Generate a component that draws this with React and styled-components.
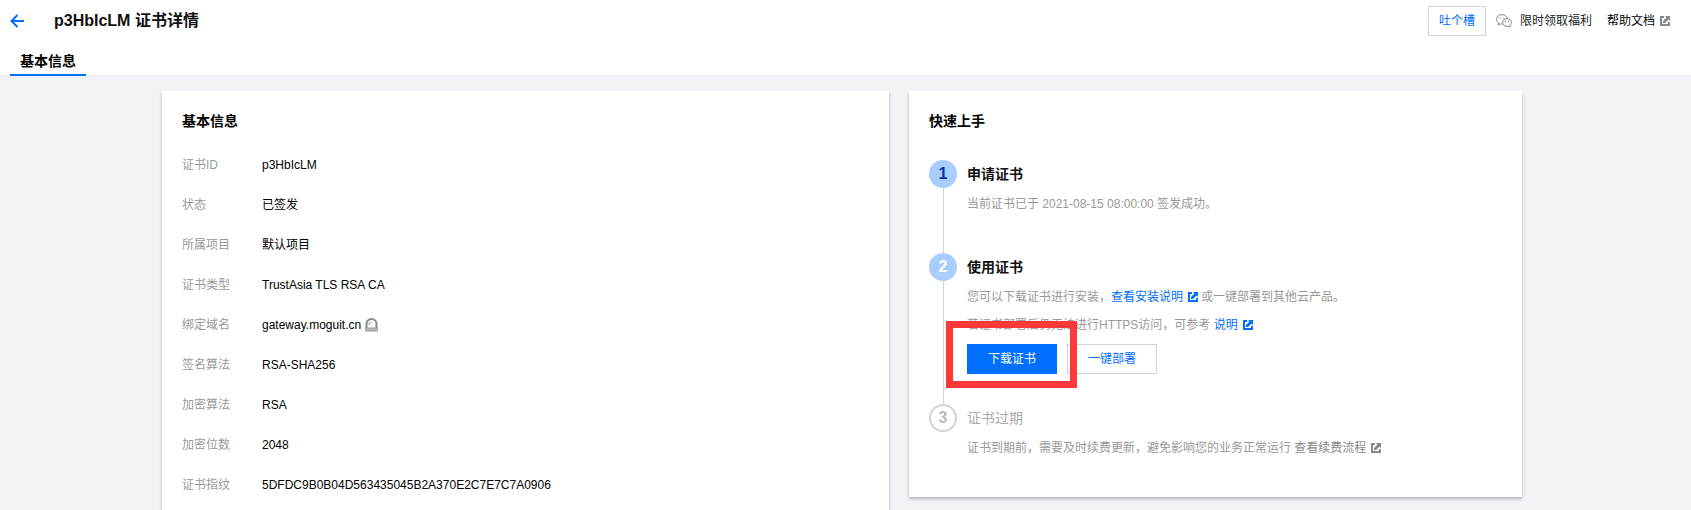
import React from "react";
import styled, { createGlobalStyle, css } from "styled-components";

const BLUE = "#006eff";
const GREY = "#999";
const LINE = "#cfd5de";

const GlobalStyle = createGlobalStyle`
  *, *::before, *::after { box-sizing: border-box; }
  body {
    margin: 0;
    color: #000;
    font: 12px/20px "Liberation Sans", "Noto Sans CJK SC", sans-serif;
  }
  h1, h2, h3, p, dl, dd, ol { margin: 0; padding: 0; }
  button { font: inherit; cursor: pointer; }
`;

const Page = styled.div`
  display: flex;
  flex-direction: column;
  height: 100vh;
  overflow: hidden;
  background: #f2f3f7;
`;

const Header = styled.header`
  flex: none;
  background: #fff;
  border-bottom: 1px solid #e5e8ed;
`;

const TitleBar = styled.div`
  display: flex;
  align-items: center;
  height: 42px;
  padding: 0 21px 0 10px;
`;

const BackButton = styled.button`
  display: flex;
  margin-right: 30px;
  padding: 0;
  border: 0;
  background: none;
  color: ${BLUE};
`;

const PageTitle = styled.h1`
  flex: 1;
  font-size: 16px;
  line-height: 24px;
  font-weight: 700;
  color: #111;
`;

const HeaderActions = styled.div`
  display: flex;
  align-items: center;
  gap: 15px;
`;

const Button = styled.button`
  height: 30px;
  padding: 0 ${(p) => (p.$compact ? 10 : 20)}px;
  border: 1px solid ${(p) => (p.$primary ? BLUE : LINE)};
  background: ${(p) => (p.$primary ? BLUE : "#fff")};
  color: ${(p) => (p.$primary ? "#fff" : BLUE)};
`;

const HeaderButton = styled(Button)`
  margin-right: -5px;
`;

const Link = styled.a`
  color: ${(p) => p.$color || BLUE};
  text-decoration: none;
`;

const HeaderLink = styled(Link)`
  display: flex;
  align-items: center;
`;

const WechatSvg = styled.svg`
  margin-right: 8px;
`;

const ExternalSvg = styled.svg`
  margin: 0 ${(p) => (p.$last ? 0 : 3)}px 0 5px;
  vertical-align: -1px;
  color: ${(p) => p.$color || "currentColor"};
`;

const Tabs = styled.nav`
  display: flex;
  padding: 6px 10px 0;
  margin-bottom: -1px;
`;

const Tab = styled.button`
  padding: 0 10px;
  border: 0;
  border-bottom: 2px solid ${BLUE};
  background: none;
  color: #000;
  font-size: 14px;
  line-height: 26px;
  font-weight: 700;
`;

const Main = styled.main`
  flex: 1;
  min-height: 0;
  padding: 15px 27px 0 20px;
`;

const Columns = styled.div`
  display: grid;
  grid-template-columns: 727fr 613fr;
  align-items: start;
  gap: 20px;
  max-width: 1360px;
  margin: 0 auto;
`;

const Card = styled.section`
  padding: 20px 20px 0;
  background: #fff;
  box-shadow: 0 2px 3px rgba(54, 58, 80, 0.32);
`;

const CardTitle = styled.h2`
  margin-bottom: 24px;
  font-size: 14px;
  line-height: 20px;
  font-weight: 700;
`;

const InfoList = styled.dl`
  display: grid;
  gap: 20px;
  padding-bottom: 20px;
`;

const InfoRow = styled.div`
  display: grid;
  grid-template-columns: 80px 1fr;
`;

const InfoLabel = styled.dt`
  color: ${GREY};
`;

const InfoValue = styled.dd`
  display: flex;
  align-items: center;
  gap: 4px;
`;

const Steps = styled.ol`
  padding-top: 5px;
  list-style: none;
`;

const Step = styled.li`
  display: grid;
  grid-template-columns: 28px 1fr;
  gap: 10px;
`;

const StepRail = styled.div`
  display: flex;
  flex-direction: column;
  &::after {
    content: "";
    flex: 1;
    width: 1px;
    margin-left: 14px;
    background: ${(p) => (p.$last ? "transparent" : LINE)};
  }
`;

const markerStyles = {
  current: css`
    background: #a9cdff;
    border-color: #a9cdff;
    color: #0034a5;
  `,
  active: css`
    background: #a9cdff;
    border-color: #a9cdff;
    color: #fff;
  `,
  pending: css`
    background: #fff;
    border-color: ${LINE};
    color: #bbb;
  `,
};

const StepMarker = styled.span`
  height: 28px;
  border: 2px solid;
  border-radius: 50%;
  font-size: 16px;
  line-height: 24px;
  font-weight: 700;
  text-align: center;
  ${(p) => markerStyles[p.$state]}
`;

const StepBody = styled.div`
  padding-bottom: 30px;
`;

const StepTitle = styled.h3`
  margin-bottom: 2px;
  font-size: 14px;
  line-height: 28px;
  font-weight: ${(p) => (p.$muted ? 400 : 700)};
  color: ${(p) => (p.$muted ? "#aaa" : "#111")};
`;

const StepText = styled.div`
  padding-bottom: 5px;
  line-height: 28px;
  color: ${GREY};
`;

const ButtonRow = styled.div`
  display: flex;
  gap: 10px;
`;

const Highlighted = styled.div`
  position: relative;
  z-index: 1;
  &::after {
    content: "";
    position: absolute;
    inset: -23px -20px -14px -21px;
    border: 7px solid #fc3838;
    pointer-events: none;
  }
`;

const External = ({ color, last }) => (
  <ExternalSvg $color={color} $last={last} width="10" height="10" viewBox="0 0 10 10" aria-hidden="true">
    <path d="M4 0H0v10h10V6H8v2H2V2h2z" fill="currentColor" />
    <path d="M5 0h5v5L8.500 3.500 5 7H3V5l3.500-3.500z" fill="currentColor" />
  </ExternalSvg>
);

const Back = () => (
  <svg width="14" height="14" viewBox="0 0 14 14" fill="none" stroke="currentColor" strokeWidth="2" aria-hidden="true">
    <path d="M14 7H2M7.5 1 1.5 7l6 6" />
  </svg>
);

const Wechat = () => (
  <WechatSvg width="16" height="14" viewBox="0 0 16 14" fill="none" stroke="#888" aria-hidden="true">
    <path d="M6.3 10.1c-.8.1-1.600 0-2.300-.3L2 10.900l.5-1.900C1.300 8.100.5 6.800.5 5.400.5 2.700 3 .6 6 .6c2.700 0 5 1.700 5.400 4" />
    <path d="M11 4.700c-2.500 0-4.500 1.700-4.500 3.800s2 3.800 4.500 3.800c.6 0 1.200-.1 1.700-.3l1.600.9-.4-1.500c1-.7 1.600-1.700 1.600-2.900 0-2.100-2-3.800-4.500-3.800z" />
    <path d="M4 3.600v1M7.800 3.600v1M9.500 7v1M12.500 7v1" />
  </WechatSvg>
);

const Siren = () => (
  <svg width="13" height="14" viewBox="0 0 13 14" fill="none" aria-hidden="true">
    <path d="M1.500 10V6a5 5 0 0 1 10 0v4" stroke="#888" strokeWidth="2" />
    <path d="M4 7c0-1.500.8-2.500 2.500-2.500" stroke="#888" />
    <path d="M0 10h13v3H0z" fill="#bbb" />
    <path d="M0 9.500h13v1H0zM0 12.500h13v1H0z" fill="#999" />
  </svg>
);

const info = [
  ["证书ID", "p3HbIcLM"],
  ["状态", "已签发"],
  ["所属项目", "默认项目"],
  ["证书类型", "TrustAsia TLS RSA CA"],
  ["绑定域名", "gateway.moguit.cn", <Siren key="siren" />],
  ["签名算法", "RSA-SHA256"],
  ["加密算法", "RSA"],
  ["加密位数", "2048"],
  ["证书指纹", "5DFDC9B0B04D563435045B2A370E2C7E7C7A0906"],
];

export default function App() {
  return (
    <Page>
      <GlobalStyle />
      <Header>
        <TitleBar>
          <BackButton type="button" aria-label="返回">
            <Back />
          </BackButton>
          <PageTitle>p3HbIcLM 证书详情</PageTitle>
          <HeaderActions>
            <HeaderButton type="button" $compact>吐个槽</HeaderButton>
            <HeaderLink href="#benefits" $color="#222">
              <Wechat />
              限时领取福利
            </HeaderLink>
            <HeaderLink href="#docs" $color="#000">
              帮助文档
              <External color="#888" last />
            </HeaderLink>
          </HeaderActions>
        </TitleBar>
        <Tabs>
          <Tab type="button" aria-current="page">基本信息</Tab>
        </Tabs>
      </Header>
      <Main>
        <Columns>
          <Card>
            <CardTitle>基本信息</CardTitle>
            <InfoList>
              {info.map(([label, value, icon]) => (
                <InfoRow key={label}>
                  <InfoLabel>{label}</InfoLabel>
                  <InfoValue>{value}{icon}</InfoValue>
                </InfoRow>
              ))}
            </InfoList>
          </Card>
          <Card>
            <CardTitle>快速上手</CardTitle>
            <Steps>
              <Step>
                <StepRail><StepMarker $state="current">1</StepMarker></StepRail>
                <StepBody>
                  <StepTitle>申请证书</StepTitle>
                  <StepText>当前证书已于 2021-08-15 08:00:00 签发成功。</StepText>
                </StepBody>
              </Step>
              <Step>
                <StepRail><StepMarker $state="active">2</StepMarker></StepRail>
                <StepBody>
                  <StepTitle>使用证书</StepTitle>
                  <StepText>
                    <p>
                      您可以下载证书进行安装，<Link href="#install">查看安装说明<External /></Link>或一键部署到其他云产品。
                    </p>
                    <p>
                      若证书部署后仍无法进行HTTPS访问，可参考 <Link href="#https">说明<External last /></Link>
                    </p>
                  </StepText>
                  <ButtonRow>
                    <Highlighted>
                      <Button type="button" $primary>下载证书</Button>
                    </Highlighted>
                    <Button type="button">一键部署</Button>
                  </ButtonRow>
                </StepBody>
              </Step>
              <Step>
                <StepRail $last><StepMarker $state="pending">3</StepMarker></StepRail>
                <StepBody>
                  <StepTitle $muted>证书过期</StepTitle>
                  <StepText>
                    证书到期前，需要及时续费更新，避免影响您的业务正常运行{" "}
                    <Link href="#renew" $color="#888">查看续费流程<External last /></Link>
                  </StepText>
                </StepBody>
              </Step>
            </Steps>
          </Card>
        </Columns>
      </Main>
    </Page>
  );
}
